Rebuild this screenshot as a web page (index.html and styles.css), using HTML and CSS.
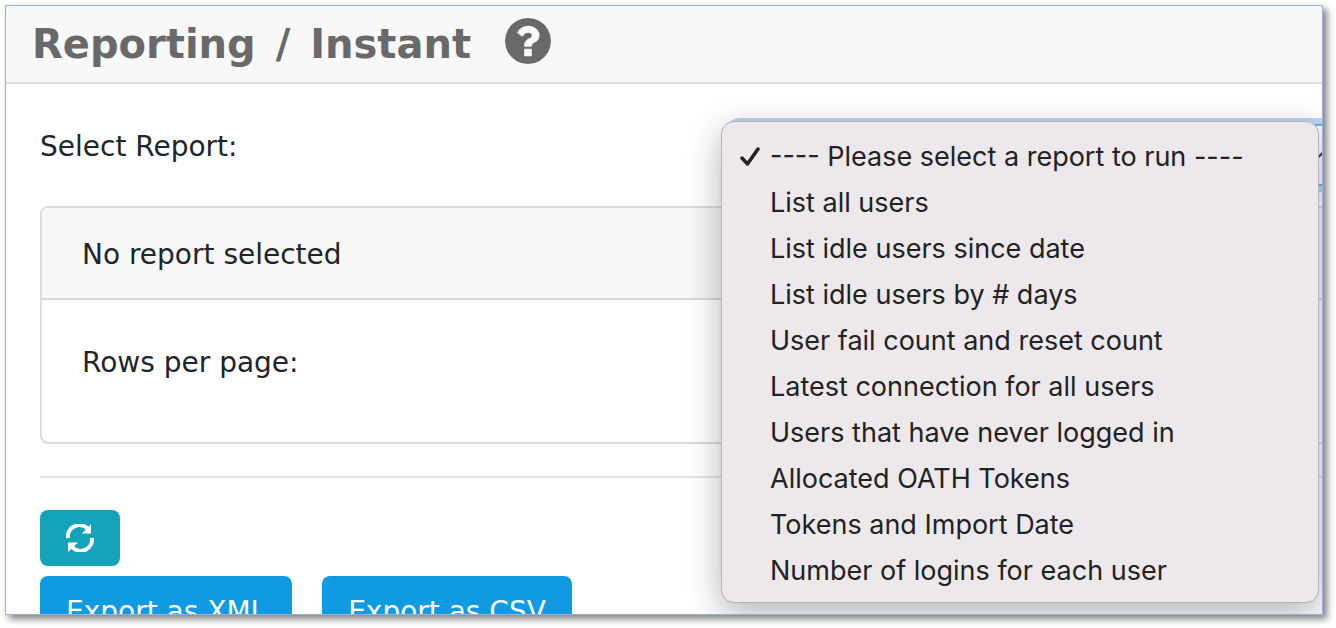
FILE: index.html
```html
<!DOCTYPE html>
<html lang="en">
<head>
  <meta charset="UTF-8">
  <meta name="viewport" content="width=device-width, initial-scale=1.0">
  <title>Reporting / Instant</title>
  <link rel="stylesheet" href="styles.css">
</head>
<body>
  <div class="window">
    <header class="page-header">
      <h1>Reporting <span class="sep">/</span> Instant</h1>
      <button type="button" class="help" aria-label="Help">
        <svg viewBox="0 0 1536 1536"><path d="M896 1248v-192q0-14-9-23t-23-9h-192q-14 0-23 9t-9 23v192q0 14 9 23t23 9h192q14 0 23-9t9-23zm256-672q0-88-55.5-163t-138.5-116-170-41q-243 0-371 213-15 24 8 42l132 100q7 6 19 6 16 0 25-12 53-68 86-92 34-24 86-24 48 0 85.5 26t37.5 59q0 38-20 61t-68 45q-63 28-115.5 86.5t-52.5 125.5v36q0 14 9 23t23 9h192q14 0 23-9t9-23q0-19 21.5-49.5t54.5-49.5q32-18 49-28.5t46-35 44.5-48 28-60.5 12.5-81zm384 192q0 209-103 385.5t-279.5 279.5-385.5 103-385.5-103-279.5-279.5-103-385.5 103-385.5 279.5-279.5 385.5-103 385.5 103 279.5 279.5 103 385.5z"/></svg>
      </button>
    </header>
    <main class="content">
      <div class="form-row">
        <label for="report">Select Report:</label>
        <div class="select-wrap">
          <select id="report" class="report-select">
            <option></option>
          </select>
          <svg class="chevron" viewBox="0 0 16 10"><path d="M1 8.500L8 1.500L15 8.500"/></svg>
          <ul class="menu" role="listbox" aria-label="Reports">
            <li role="option" aria-selected="true">
              <svg class="check" viewBox="0 0 20 20"><path d="M2 11L7.500 17L18 2"/></svg>---- Please select a report to run ----</li>
            <li role="option">List all users</li>
            <li role="option">List idle users since date</li>
            <li role="option">List idle users by # days</li>
            <li role="option">User fail count and reset count</li>
            <li role="option">Latest connection for all users</li>
            <li role="option">Users that have never logged in</li>
            <li role="option">Allocated OATH Tokens</li>
            <li role="option">Tokens and Import Date</li>
            <li role="option">Number of logins for each user</li>
          </ul>
        </div>
      </div>
      <section class="card">
        <div class="card-header">No report selected</div>
        <div class="card-body">Rows per page:</div>
      </section>
      <hr>
      <button type="button" class="btn btn-info" aria-label="Refresh">
        <svg viewBox="0 0 28 28"><path class="arc" d="M2 14A11.500 11.500 0 0 1 22 5M26 14A11.500 11.500 0 0 1 6 23"/><path d="M25 0V9.500H16zM2 28V18.500H12z"/></svg>
      </button>
      <div class="actions">
        <button type="button" class="btn btn-primary">Export as XML</button>
        <button type="button" class="btn btn-primary">Export as CSV</button>
      </div>
    </main>
  </div>
</body>
</html>
```
FILE: styles.css
```css
* {
  box-sizing: border-box;
}
body {
  margin: 0;
  padding: 5px 13px 13px 5px;
  height: 100vh;
  overflow: hidden;
  background: #fff;
  color: #212529;
  font-family: Verdana, "DejaVu Sans", sans-serif;
  font-size: 28px;
  line-height: 42px;
}
.window {
  height: 100%;
  overflow: hidden;
  border: 1px solid #9bb2dc;
  box-shadow: 4px 4px 7px rgba(0, 0, 0, 0.5);
}
.page-header {
  display: flex;
  align-items: center;
  gap: 34px;
  height: 78px;
  padding: 0 26px;
  background: #f8f8f8;
  border-bottom: 2px solid #dcdcdc;
  color: #696969;
}
.page-header h1 {
  margin: 0;
  font-size: 40px;
  line-height: 60px;
}
.sep {
  margin: 0 6px;
}
.help {
  margin-bottom: 6px;
  padding: 0;
  border: 0;
  background: none;
  width: 46px;
  height: 46px;
}
.help svg {
  display: block;
  fill: #696969;
}
/* the form is a little wider than the window and runs off its right side */
.content {
  margin-right: -22px;
  padding: 40px 0 0 34px;
}
.form-row {
  display: grid;
  grid-template-columns: 1fr 1fr;
  gap: 80px;
  margin-bottom: 20px;
}
.form-row label {
  padding-top: 2px;
}
.select-wrap {
  position: relative;
}
.report-select {
  display: block;
  width: 100%;
  height: 62px;
  appearance: none;
  border: 2px solid #72aef0;
  border-radius: 8px;
  background: #fff;
  box-shadow: 0 0 0 6px #bfd5f8;
  font: inherit;
}
.chevron {
  position: absolute;
  top: 26px;
  right: 12px;
  width: 16px;
  height: 10px;
  fill: none;
  stroke: #343a40;
  stroke-width: 2;
}
.menu {
  position: absolute;
  top: -3px;
  left: -11px;
  right: 25px;
  margin: 0;
  padding: 12px 0 8px;
  list-style: none;
  background: #ece8eb;
  border: 1px solid #b4b2b4;
  border-radius: 13px;
  box-shadow: 0 10px 34px rgba(0, 0, 0, 0.3);
  color: #222;
  font-family: Inter, sans-serif;
  font-size: 27px;
  line-height: 46px;
}
.menu li {
  padding-left: 48px;
  white-space: nowrap;
}
.check {
  position: absolute;
  top: 25px;
  left: 18px;
  width: 20px;
  height: 20px;
  fill: none;
  stroke: #222;
  stroke-width: 3.5;
  stroke-linecap: round;
  stroke-linejoin: round;
}
.card {
  border: 2px solid #dcdcdc;
  border-radius: 8px;
  overflow: hidden;
}
.card-header {
  padding: 26px 40px 22px;
  background: #f7f7f7;
  border-bottom: 2px solid #d8d8d8;
}
.card-body {
  padding: 42px 40px 58px;
}
hr {
  margin: 32px 0;
  border: 0;
  border-top: 2px solid #e3e3e3;
}
.btn {
  display: block;
  border: 0;
  border-radius: 8px;
  color: #fff;
  font: inherit;
}
.btn-info {
  padding: 14px 26px;
  background: #14a3b8;
}
.btn-info svg {
  display: block;
  width: 28px;
  height: 28px;
  fill: #fff;
}
.btn-info .arc {
  fill: none;
  stroke: #fff;
  stroke-width: 4;
}
.actions {
  display: flex;
  gap: 30px;
  margin-top: 10px;
}
.btn-primary {
  padding: 15px 26px;
  background: #0f9ae2;
}
```
